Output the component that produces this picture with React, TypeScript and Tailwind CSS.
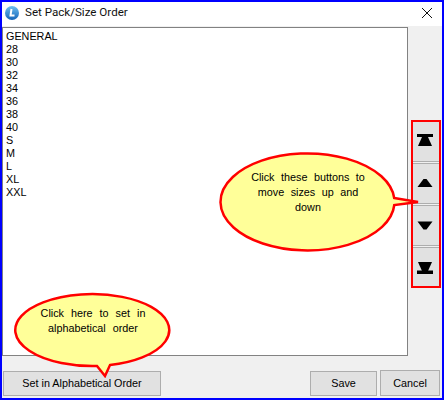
import React from "react";

const sizes = ["GENERAL", "28", "30", "32", "34", "36", "38", "40", "S", "M", "L", "XL", "XXL"];

const MoveButton = ({ className, children }: { className: string; children: React.ReactNode }) => (
  <button className={`flex w-full shrink-0 items-center justify-center border-[#adadad] bg-[#e1e1e1] ${className}`}>
    <svg width="16" height="16" viewBox="0 0 16 16" fill="#000" className="mr-[2px]">
      {children}
    </svg>
  </button>
);

const App = () => {
  return (
    <div className="relative flex h-[400px] w-[444px] flex-col overflow-hidden border-2 border-[#0000ff] bg-[#f0f0f0] font-['Liberation_Sans',sans-serif] text-[10.8px] text-black">
      {/* title bar */}
      <div className="flex h-[24px] shrink-0 items-center bg-white pb-[2px]">
        <svg width="14" height="14" viewBox="0 0 14 14" className="ml-[3px]">
          <defs>
            <linearGradient id="logo" x1="0" y1="0" x2="0" y2="1">
              <stop offset="0" stopColor="#6fc0f0" />
              <stop offset="1" stopColor="#1464b8" />
            </linearGradient>
          </defs>
          <circle cx="7" cy="7" r="7" fill="url(#logo)" />
          <path d="M6.5 3 L5.5 9.5 H9.5" fill="none" stroke="#fff" strokeWidth="2" />
        </svg>
        <span className="ml-[6px] font-['Roboto',sans-serif] text-[11.6px] text-[#111]">Set Pack/Size Order</span>
        <svg width="10" height="10" viewBox="0 0 10 10" className="ml-auto mr-[10px]" stroke="#111" strokeWidth="1">
          <path d="M0 0 L10 10 M10 0 L0 10" />
        </svg>
      </div>

      <div className="flex min-h-0 flex-1 pt-px">
        <div className="h-[329px] w-[406px] shrink-0 border border-[#828282] bg-white pl-[3px] pt-[2px] leading-[13px]">
          {sizes.map((s) => (
            <div key={s} className="h-[13px]">{s}</div>
          ))}
        </div>
        <div className="ml-[3px] mt-[93px] flex h-[168px] w-[30px] flex-col gap-px border-2 border-[#ff0000] bg-[#f0f0f0]">
          <MoveButton className="h-[40px] border-b">
            <rect x="0" y="0" width="16" height="3" />
            <polygon points="5,3 11,3 15,12 1,12" />
          </MoveButton>
          <MoveButton className="h-[41px] border-y">
            <polygon points="6.5,3 9.5,3 15.5,11 0.5,11" />
          </MoveButton>
          <MoveButton className="h-[41px] border-y">
            <polygon points="0.5,3.5 15.5,3.5 9.5,11.5 6.5,11.5" />
          </MoveButton>
          <MoveButton className="h-[39px] border-t">
            <polygon points="1,3 15,3 11,12 5,12" />
            <rect x="0" y="11.5" width="16" height="3.5" />
          </MoveButton>
        </div>
      </div>

      <div className="flex h-[42px] shrink-0 items-start pt-[15px]">
        <button className="ml-px h-[25px] w-[158px] border border-[#adadad] bg-[#e1e1e1]">Set in Alphabetical Order</button>
        <button className="ml-auto h-[25px] w-[67px] border border-[#adadad] bg-[#e1e1e1]">Save</button>
        <button className="ml-[3px] mr-[2px] mt-[-1px] h-[26px] w-[60px] border border-[#adadad] bg-[#e1e1e1]">Cancel</button>
      </div>

      {/* callout: move buttons */}
      <div className="absolute left-[216px] top-[149px] h-[104px] w-[204px]">
        <svg width="204" height="104" viewBox="0 0 204 104" className="absolute inset-0">
          <path d="M176.2 47 L200 51 L176.3 54 A87 48.5 0 1 1 176.2 47 Z" fill="#ffff99" stroke="#ff0000" strokeWidth="2.5" />
        </svg>
        <div className="relative ml-[30px] mt-[19px] w-[120px] text-center leading-[15px] [word-spacing:3.5px]">
          Click these buttons to move sizes up and down
        </div>
      </div>

      {/* callout: alphabetical */}
      <div className="absolute left-[12px] top-[290px] h-[86px] w-[160px]">
        <svg width="160" height="86" viewBox="0 0 160 86" className="absolute inset-0">
          <path d="M83 74 L91 84 L96 73.1 A77 36 0 1 0 83 74 Z" fill="#ffff99" stroke="#ff0000" strokeWidth="2.5" />
        </svg>
        <div className="relative ml-[20px] mt-[14px] w-[118px] text-center leading-[15px] [word-spacing:4px]">
          Click here to set in alphabetical order
        </div>
      </div>
    </div>
  );
};

export default App;
